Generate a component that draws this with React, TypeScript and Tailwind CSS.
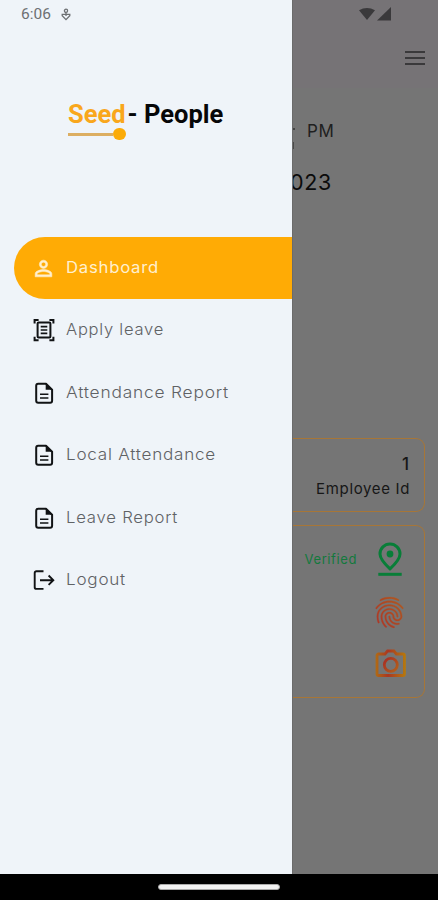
import { MdFingerprint, MdPersonOutline } from "react-icons/md";

const DocumentIcon = () => (
	<svg width="24" height="24" viewBox="0 0 24 24" fill="none" stroke="#111315" strokeWidth="2">
		<path d="M14 2.8H6.2a2 2 0 0 0-2 2v14.9a2 2 0 0 0 2 2h11.9a2 2 0 0 0 2-2V8.8z" strokeLinejoin="round" />
		<path d="M13.7 2.5v6.3H20z" fill="#111315" stroke="none" />
		<path d="M8 13.3h8.4M8 17h8.4" strokeWidth="1.6" />
	</svg>
);

const ApplyIcon = () => (
	<svg width="24" height="24" viewBox="0 0 24 24" fill="none" stroke="#111315" strokeWidth="2">
		<path d="M2.6 5.6V2.1h4M17.4 2.1h4v3.5M2.6 18.8v3.5h4M17.4 22.3h4v-3.5" />
		<rect x="5.6" y="4.6" width="12.8" height="15" rx="1" />
		<path d="M8.7 8.7h6.6M8.7 12h6.6M8.7 15.3h6.6" strokeWidth="1.7" />
	</svg>
);

const LogoutIcon = () => (
	<svg width="24" height="24" viewBox="0 0 24 24" fill="none" stroke="#111315" strokeWidth="1.9">
		<path d="M11.5 3.2H4.4a1.7 1.7 0 0 0-1.7 1.7v14.3a1.7 1.7 0 0 0 1.7 1.7h7.1" />
		<path d="M8 12.2h13M16.6 7.5l4.7 4.7-4.7 4.7" />
	</svg>
);

const items = [
	{
		label: "Dashboard",
		icon: <MdPersonOutline size={25} className="stroke-current stroke-[0.5] [&_[fill=none]]:stroke-none" />,
		width: "w-[93px]",
		active: true,
	},
	{ label: "Apply leave", icon: <ApplyIcon />, width: "w-[98px]" },
	{ label: "Attendance Report", icon: <DocumentIcon />, width: "w-[163px]" },
	{ label: "Local Attendance", icon: <DocumentIcon />, width: "w-[150px]" },
	{ label: "Leave Report", icon: <DocumentIcon />, width: "w-[112px]" },
	{ label: "Logout", icon: <LogoutIcon />, width: "w-[60px]" },
];

function Drawer() {
	return (
		<aside className="w-[292px] shrink-0 bg-[#eff4f9]">
			<div className="h-[29px] pl-[21px] pt-[1px] flex items-center gap-[11px] text-[#6d7073]">
				<span className="font-[Roboto] text-[15.5px] leading-none">6:06</span>
				<svg className="-ml-[1px]" width="10" height="14" viewBox="0 0 10 14" fill="none" stroke="currentColor" strokeWidth="1.3">
					<circle cx="5" cy="2.8" r="1.6" />
					<path d="M1.2 6.3h7.6v1.4L5 11.6 1.2 7.7zM5 4.5V8" />
				</svg>
			</div>
			<div className="h-[208px] pl-[68px] pt-[71px]">
				<h1 className="font-[Roboto] font-bold text-[25.5px] leading-[29px] whitespace-nowrap text-[#060708]">
					<span className="text-[#f9a71c]">Seed</span>
					<span className="ml-[2px]">- People</span>
				</h1>
				<div className="flex items-center -mt-[1px]">
					<div className="w-[45px] h-[3px] bg-[#dcae62]" />
					<div className="w-[13px] h-[12px] rounded-full bg-[#fbab08]" />
				</div>
			</div>
			<nav className="pl-[14px]">
				{items.map(item => (
					<a
						key={item.label}
						className={
							item.active
								? "flex items-center h-[62px] pl-[17px] rounded-l-full bg-[#ffab05] text-[#fff0cf]"
								: "flex items-center h-[62.5px] pl-[17px] text-[#5f6265]"
						}
					>
						<span className="w-[25px] flex justify-center">{item.icon}</span>
						<svg height="28" className={`ml-[10px] ${item.width} overflow-visible`}>
							<text
								x="0"
								y="19"
								textLength="100%"
								lengthAdjust="spacingAndGlyphs"
								fill="currentColor"
								className={
									item.active
										? "font-[Inter] text-[15.5px] font-normal tracking-[0.7px]"
										: "font-[Inter] text-[15.5px] font-light tracking-[0.7px]"
								}
							>
								{item.label}
							</text>
						</svg>
					</a>
				))}
			</nav>
		</aside>
	);
}

function DimmedPage() {
	return (
		<main className="flex-1 min-w-0 overflow-hidden bg-[#757575] border-l border-[#6b6b6b] font-[Inter]">
			<header className="h-[88px] bg-[#767376] text-[#3a393b]">
				<div className="h-[28px] pl-[66px] flex items-center gap-[2px]">
					<svg width="16" height="14" viewBox="0 0 17 14" fill="currentColor">
						<path d="M0 3Q8.5-2 17 3L8.5 13.5z" />
					</svg>
					<svg width="14" height="14" viewBox="0 0 14 14" fill="currentColor">
						<path d="M14 0v13.5H0z" />
					</svg>
				</div>
				<div className="flex flex-col items-end gap-1 pr-[13px] pt-[23px]">
					<div className="w-5 h-[2px] bg-current" />
					<div className="w-5 h-[2px] bg-current" />
					<div className="w-5 h-[2px] bg-current" />
				</div>
			</header>
			<div className="pt-[33px] flex items-start text-[#202020]">
				{/* tail of the clock digits, the rest is under the drawer */}
				<div className="w-[14px] pt-[7px] flex flex-col gap-[12px]">
					<div className="w-[1.5px] h-[2px] bg-[#444]" />
					<div className="w-[1px] h-[7px] bg-[#4a4a4a]" />
				</div>
				<p className="h-5 text-[17px] leading-5 tracking-[0.6px]">PM</p>
			</div>
			<p className="mt-[21px] -ml-[3px] text-[21.5px] leading-6 tracking-[0.6px] text-[#0b0b0b]">023</p>
			<section className="mt-[244px] mr-[13px] h-[74px] border border-l-0 border-[#a77637] rounded-r-[9px] pr-[15px] pt-[15px] text-right text-[#171717]">
				<p className="text-[17px] leading-5 font-medium">1</p>
				<p className="mt-[5px] -mr-[1px] text-[15px] leading-5 tracking-[0.65px] whitespace-nowrap">Employee Id</p>
			</section>
			<section className="mt-[13px] mr-[13px] h-[173px] border border-l-0 border-[#a77637] rounded-r-[9px] pr-[17px] pt-[16px] flex flex-col items-end">
				<div className="flex items-center gap-[18px] text-[#13793d]">
					<span className="text-[13px] tracking-[0.6px]">Verified</span>
					<svg width="32" height="35" viewBox="0 0 32 35" fill="none" stroke="#087e38" strokeWidth="3">
						<path d="M15 26.8C9 21.3 5 16.6 5 12a10 10 0 0 1 20 0c0 4.6-4 9.3-10 14.8z" />
						<circle cx="15" cy="12" r="3.4" fill="#087e38" stroke="none" />
						<path d="M3.3 32.3h23.4" />
					</svg>
				</div>
				<MdFingerprint className="mt-[17px] -mr-[1px] w-[37px] h-[37px] shrink-0 fill-[url(#warm)] stroke-[url(#warm)] stroke-[0.2] [&_[fill=none]]:stroke-none" />
				<svg className="mt-[17px] shrink-0" width="33" height="32" viewBox="0 0 33 32" fill="none" stroke="url(#body)" strokeWidth="2.8">
					<defs>
						<linearGradient id="warm" gradientUnits="userSpaceOnUse" x1="2" y1="20" x2="22" y2="4">
							<stop stopColor="#ad3327" />
							<stop offset="1" stopColor="#b05a1e" />
						</linearGradient>
						<linearGradient id="body" gradientUnits="userSpaceOnUse" x1="2" y1="16" x2="32" y2="16">
							<stop stopColor="#b06a14" />
							<stop offset="0.4" stopColor="#ab3722" />
							<stop offset="1" stopColor="#b67b0c" />
						</linearGradient>
						<linearGradient id="lens" gradientUnits="userSpaceOnUse" x1="10" y1="10" x2="24" y2="22">
							<stop stopColor="#a92b24" />
							<stop offset="1" stopColor="#b2601a" />
						</linearGradient>
					</defs>
					<path d="M4.5 6H11l2.5-3h6.4l2.5 3h6.5a1.5 1.5 0 0 1 1.5 1.5V26a1.5 1.5 0 0 1-1.5 1.5H4.5A1.5 1.5 0 0 1 3 26V7.5A1.5 1.5 0 0 1 4.5 6z" />
					<circle cx="16.8" cy="16.8" r="6.5" stroke="url(#lens)" />
				</svg>
			</section>
		</main>
	);
}

export default function App() {
	return (
		<div className="w-[438px] h-[900px] flex flex-col overflow-hidden bg-black">
			<div className="flex h-[874px]">
				<Drawer />
				<DimmedPage />
			</div>
			<div className="flex-1 pt-[10px] pl-[158px]">
				<div className="w-[122px] h-[6px] rounded-full bg-[#f2f2f2] border border-[#aaa]" />
			</div>
		</div>
	);
}
